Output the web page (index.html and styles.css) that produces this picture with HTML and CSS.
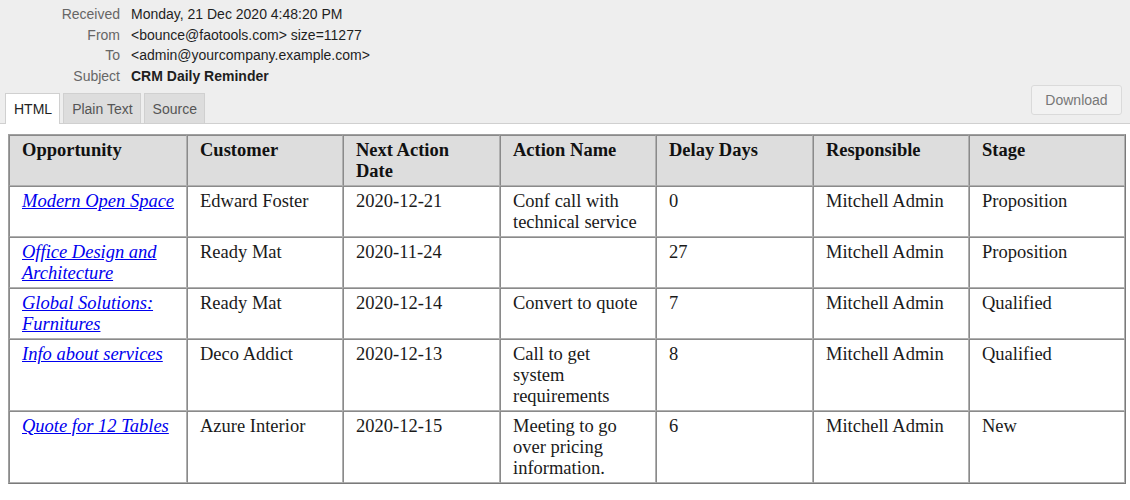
FILE: index.html
```html
<!DOCTYPE html>
<html>
<head>
<meta charset="utf-8">
<link rel="stylesheet" href="styles.css">
</head>
<body>
<div class="top">
  <div class="meta">
    <div class="label">Received</div><div class="value">Monday, 21 Dec 2020 4:48:20 PM</div>
    <div class="label">From</div><div class="value">&lt;bounce@faotools.com&gt; size=11277</div>
    <div class="label">To</div><div class="value">&lt;admin@yourcompany.example.com&gt;</div>
    <div class="label">Subject</div><div class="value subject">CRM Daily Reminder</div>
  </div>
  <div class="toolbar">
    <div class="tabs">
      <div class="tab active">HTML</div>
      <div class="tab">Plain Text</div>
      <div class="tab">Source</div>
    </div>
    <button class="download">Download</button>
  </div>
</div>
<div class="content">
  <table class="report">
    <colgroup>
      <col class="c1"><col class="c2"><col class="c3"><col class="c4"><col class="c5"><col class="c6"><col class="c7">
    </colgroup>
    <thead>
      <tr>
        <th>Opportunity</th><th>Customer</th><th>Next Action Date</th><th>Action Name</th><th>Delay Days</th><th>Responsible</th><th>Stage</th>
      </tr>
    </thead>
    <tbody>
      <tr>
        <td><a href="#">Modern Open Space</a></td><td>Edward Foster</td><td>2020-12-21</td><td>Conf call with technical service</td><td>0</td><td>Mitchell Admin</td><td>Proposition</td>
      </tr>
      <tr>
        <td><a href="#">Office Design and Architecture</a></td><td>Ready Mat</td><td>2020-11-24</td><td></td><td>27</td><td>Mitchell Admin</td><td>Proposition</td>
      </tr>
      <tr>
        <td><a href="#">Global Solutions: Furnitures</a></td><td>Ready Mat</td><td>2020-12-14</td><td>Convert to quote</td><td>7</td><td>Mitchell Admin</td><td>Qualified</td>
      </tr>
      <tr>
        <td><a href="#">Info about services</a></td><td>Deco Addict</td><td>2020-12-13</td><td>Call to get system requirements</td><td>8</td><td>Mitchell Admin</td><td>Qualified</td>
      </tr>
      <tr>
        <td><a href="#">Quote for 12 Tables</a></td><td>Azure Interior</td><td>2020-12-15</td><td>Meeting to go over pricing information.</td><td>6</td><td>Mitchell Admin</td><td>New</td>
      </tr>
    </tbody>
  </table>
</div>
</body>
</html>
```

FILE: styles.css
```css
html, body {
  margin: 0;
  padding: 0;
  background: #ffffff;
}

.top {
  background: #eeeeee;
  border-bottom: 1px solid #d0d0d0;
  font-family: "Liberation Sans", Arial, sans-serif;
  font-size: 14px;
}

.meta {
  display: grid;
  grid-template-columns: 120px 1fr;
  column-gap: 11px;
  padding-top: 4px;
  line-height: 20.67px;
}

.label {
  text-align: right;
  color: #666666;
}

.value {
  color: #1e1e1e;
}

.subject {
  font-weight: bold;
}

.toolbar {
  display: flex;
  justify-content: space-between;
  align-items: flex-end;
  margin-top: -2px;
  padding-left: 5px;
  padding-right: 8px;
  height: 38px;
}

.tabs {
  display: flex;
  gap: 3px;
  margin-bottom: -1px;
}

.tab {
  height: 30px;
  line-height: 30px;
  padding: 0 7px 0 8px;
  background: #dddddd;
  border: 1px solid #d0d0d0;
  border-bottom: none;
  box-sizing: border-box;
  color: #555555;
}

.tab.active {
  background: #ffffff;
  color: #222222;
  height: 31px;
}

.download {
  height: 30px;
  width: 91px;
  margin-bottom: 8px;
  background: #f2f2f2;
  border: 1px solid #dadada;
  border-radius: 3px;
  font-family: "Liberation Sans", Arial, sans-serif;
  font-size: 14px;
  color: #777777;
  padding: 0;
}

.content {
  padding: 10px 8px 0 8px;
}

.report {
  table-layout: fixed;
  width: 1118px;
  border-collapse: separate;
  border-spacing: 0;
  border: 1px solid;
  border-color: #a0a0a0 #7a7a7a #7a7a7a #a0a0a0;
  font-family: "Liberation Serif", "Times New Roman", serif;
  font-size: 18.5px;
  line-height: 21px;
  color: #1a1a1a;
}

.c1 { width: 178px; }
.c2 { width: 156px; }
.c3 { width: 157px; }
.c4 { width: 156px; }
.c5 { width: 157px; }
.c6 { width: 156px; }
.c7 { width: 156px; }

.report th,
.report td {
  border: 1px solid;
  border-color: #8a8a8a #b0b0b0 #b0b0b0 #8a8a8a;
  padding: 4px 12px 3px 12px;
  text-align: left;
  vertical-align: top;
}

.report th:first-child,
.report td:first-child {
  padding-right: 6px;
}

.report th {
  background: #dddddd;
  font-weight: bold;
  color: #111111;
}

.report a {
  color: #0000ee;
  font-style: italic;
  text-decoration: underline;
}
```
